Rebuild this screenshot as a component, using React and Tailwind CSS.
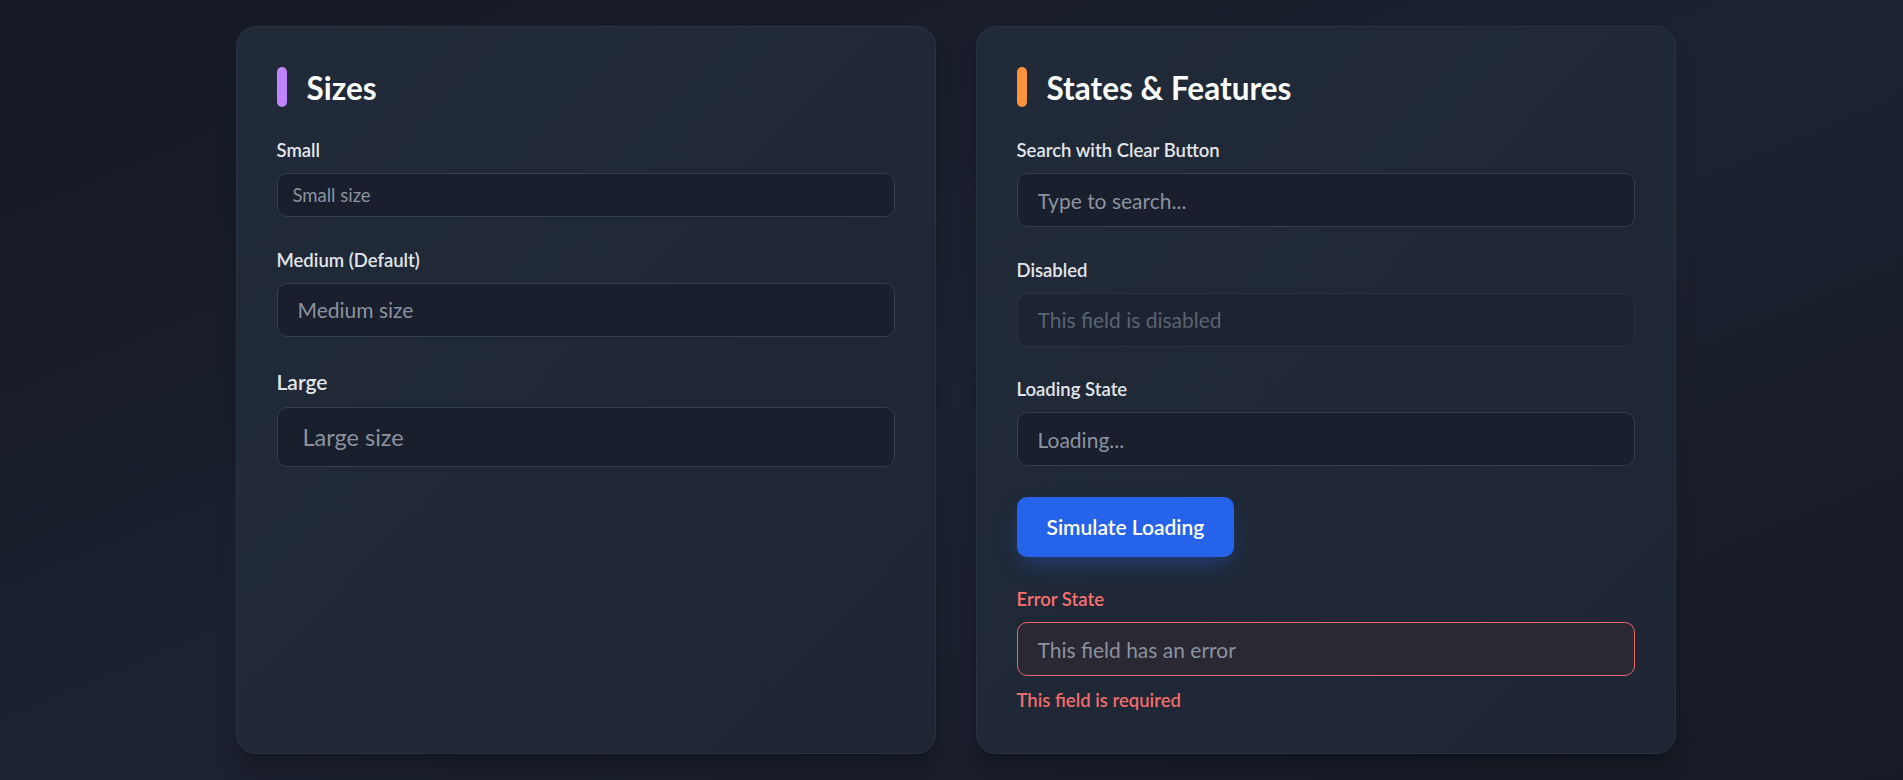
import { useState } from "react";

const FONT = "font-['Lato',sans-serif]";

function Label({ children, className = "" }) {
  return <label className={`block mb-[10px] ${className}`}>{children}</label>;
}

function Field({ label, size = "md", placeholder, disabled, error, value, onChange }) {
  const sizes = {
    sm: { label: "text-[18.5px] leading-[25px] font-semibold", input: "h-[44px] px-[15px] text-[18.5px]" },
    md: { label: "text-[18.5px] leading-[25px] font-semibold", input: "h-[54px] px-[20px] text-[21px]" },
    lg: { label: "text-[21px] leading-[30px] font-semibold", input: "h-[60px] px-[25px] text-[23.5px]" },
  };
  const s = sizes[size];
  return (
    <div>
      <Label className={`${s.label} ${error ? "text-[#f87171] font-medium" : "text-[#e2e5ea]"}`}>{label}</Label>
      <input
        type="text"
        value={value}
        onChange={onChange}
        disabled={disabled}
        placeholder={placeholder}
        className={`w-full rounded-[10px] border outline-none ${s.input} ${
          disabled
            ? "bg-[#1d2431] border-[#2b3341] text-[#5d6573] placeholder:text-[#5a6270] cursor-not-allowed"
            : error
            ? "bg-[#292833] border-[#e8696b] text-gray-200 placeholder:text-[#8c929f]"
            : "bg-[#191f2d] border-[#343d4b] text-gray-200 placeholder:text-[#8c929f]"
        }`}
      />
      {error && <p className="mt-[12px] text-[18.5px] leading-[25px] font-semibold text-[#f06b6b]">{error}</p>}
    </div>
  );
}

function Card({ title, accent, children }) {
  return (
    <div className="rounded-[20px] border border-[#2a3341] bg-linear-to-br from-[#212a38] to-[#1e2634] p-10 shadow-xl shadow-black/20">
      <div className="flex items-center gap-5 mb-[31px]">
        <span className={`w-2.5 h-10 rounded-full ${accent}`} />
        <h2 className="text-[31.5px] leading-[40px] font-bold text-white translate-y-[1px]">{title}</h2>
      </div>
      <div className="flex flex-col gap-[30.5px]">{children}</div>
    </div>
  );
}

export default function App() {
  const [query, setQuery] = useState("");
  const [loading, setLoading] = useState(false);

  const simulate = () => {
    setLoading(true);
    setTimeout(() => setLoading(false), 2000);
  };

  return (
    <div className={`min-h-screen w-full bg-linear-to-br from-[#141923] via-[#1c2230] to-[#161b25] pl-[8px] pt-[26px] pb-10 ${FONT}`}>
      <div className="mx-auto grid w-[1440px] grid-cols-2 gap-10">
        {/* Sizes */}
        <Card title="Sizes" accent="bg-[#c084fc]">
          <Field label="Small" size="sm" placeholder="Small size" />
          <Field label="Medium (Default)" size="md" placeholder="Medium size" />
          <Field label="Large" size="lg" placeholder="Large size" />
        </Card>

        {/* States */}
        <Card title="States & Features" accent="bg-[#fb923c]">
          <Field label="Search with Clear Button" placeholder="Type to search..." value={query} onChange={(e) => setQuery(e.target.value)} />
          <Field label="Disabled" placeholder="This field is disabled" disabled />
          <Field label="Loading State" placeholder="Loading..." />
          <div>
            <button
              onClick={simulate}
              className="h-[60px] rounded-[10px] bg-[#2563eb] px-[30px] text-[21px] font-semibold text-white shadow-[0_10px_24px_-6px_rgba(37,99,235,0.45)]"
            >
              {loading ? "Loading..." : "Simulate Loading"}
            </button>
          </div>
          <Field label="Error State" placeholder="This field has an error" error="This field is required" />
        </Card>
      </div>
    </div>
  );
}
